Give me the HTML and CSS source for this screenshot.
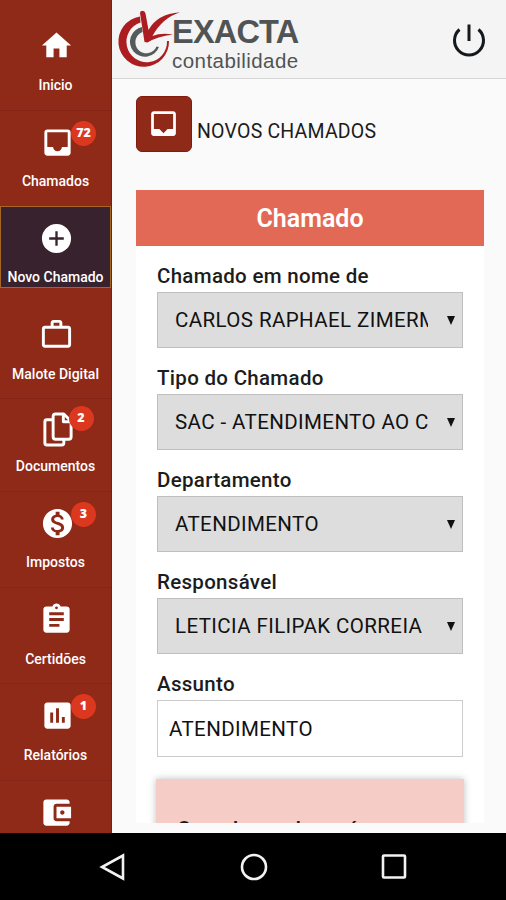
FILE: index.html
```html
<!DOCTYPE html>
<html lang="pt-BR">
<head>
    <meta charset="UTF-8">
    <meta name="viewport" content="width=device-width, initial-scale=1.0">
    <title>Exacta Contabilidade - Novo Chamado</title>
    <link rel="stylesheet" href="styles.css">
</head>
<body>
    <div class="app">
        <nav class="sidebar">
            <a class="item first">
                <span class="icon"><svg viewBox="0 0 24 24"><path d="M10 20v-6h4v6h5v-8h3L12 3 2 12h3v8z"/></svg></span>
                <span class="label">Inicio</span>
            </a>
            <a class="item">
                <span class="icon shift"><svg viewBox="0 0 24 24"><path d="M19 3H5c-1.1 0-2 .9-2 2v14c0 1.1.9 2 2 2h14c1.1 0 2-.9 2-2V5c0-1.1-.9-2-2-2zm0 12h-4c0 1.66-1.35 3-3 3s-3-1.34-3-3H5V5h14v10z"/></svg><b class="badge">72</b></span>
                <span class="label">Chamados</span>
            </a>
            <a class="item active">
                <span class="icon"><svg viewBox="0 0 24 24"><path d="M12 2a10 10 0 1 0 0 20 10 10 0 0 0 0-20zm5 10.800h-4.200v4.200h-1.600v-4.200H7v-1.600h4.200V7h1.600v4.200h4.200v1.600z"/></svg></span>
                <span class="label">Novo Chamado</span>
            </a>
            <a class="item">
                <span class="icon"><svg viewBox="0 0 24 24"><path d="M14 6V4h-4v2h4zM4 8v11h16V8H4zm16-2c1.11 0 2 .89 2 2v11c0 1.11-.89 2-2 2H4c-1.11 0-2-.89-2-2V8c0-1.11.89-2 2-2h4V4c0-1.11.89-2 2-2h4c1.11 0 2 .89 2 2v2h4z"/></svg></span>
                <span class="label">Malote Digital</span>
            </a>
            <a class="item docs">
                <span class="icon shift"><svg viewBox="0 0 30 36"><path class="line" d="M10 8H3.500Q1.500 8 1.500 10V32Q1.500 34 3.500 34H19Q21 34 21 32V28"/><path class="line" d="M12.500 2H21L28.500 9.500V25.500Q28.500 28 26 28H12.500Q10 28 10 25.500V4.500Q10 2 12.500 2zM20.500 2V10H28"/></svg><b class="badge">2</b></span>
                <span class="label">Documentos</span>
            </a>
            <a class="item">
                <span class="icon shift"><svg viewBox="0 0 24 24"><path d="M12 2C6.480 2 2 6.480 2 12s4.480 10 10 10 10-4.480 10-10S17.520 2 12 2zm1.410 16.090V20h-2.670v-1.930c-1.710-.360-3.160-1.460-3.270-3.400h1.960c.100 1.050.820 1.870 2.650 1.870 1.960 0 2.400-.980 2.400-1.590 0-.830-.440-1.610-2.670-2.140-2.480-.600-4.180-1.620-4.180-3.670 0-1.720 1.390-2.840 3.110-3.210V4h2.670v1.950c1.860.450 2.790 1.860 2.850 3.390H14.300c-.050-1.110-.640-1.870-2.220-1.870-1.500 0-2.400.680-2.400 1.640 0 .840.650 1.390 2.670 1.910s4.180 1.390 4.180 3.910c-.010 1.830-1.380 2.830-3.120 3.160z"/></svg><b class="badge">3</b></span>
                <span class="label">Impostos</span>
            </a>
            <a class="item">
                <span class="icon"><svg viewBox="0 0 24 24"><path d="M19 3h-4.180C14.400 1.840 13.300 1 12 1c-1.300 0-2.400.840-2.820 2H5c-1.100 0-2 .9-2 2v14c0 1.100.9 2 2 2h14c1.100 0 2-.9 2-2V5c0-1.100-.9-2-2-2zm-7 0c.55 0 1 .45 1 1s-.45 1-1 1-1-.45-1-1 .45-1 1-1zm2 14H7v-2h7v2zm3-4H7v-2h10v2zm0-4H7V7h10v2z"/></svg></span>
                <span class="label">Certidões</span>
            </a>
            <a class="item">
                <span class="icon shift"><svg viewBox="0 0 24 24"><path d="M19 3H5c-1.100 0-2 .9-2 2v14c0 1.100.9 2 2 2h14c1.100 0 2-.9 2-2V5c0-1.100-.9-2-2-2zM9 17H7v-7h2v7zm4 0h-2V7h2v10zm4 0h-2v-4h2v4z"/></svg><b class="badge">1</b></span>
                <span class="label">Relatórios</span>
            </a>
            <a class="item">
                <span class="icon"><svg viewBox="0 0 24 24"><path d="M21 18v1c0 1.100-.9 2-2 2H5c-1.110 0-2-.9-2-2V5c0-1.100.890-2 2-2h14c1.100 0 2 .9 2 2v1h-9c-1.110 0-2 .9-2 2v8c0 1.100.890 2 2 2h9zm-9-2h10V8H12v8zm4-2.500c-.830 0-1.500-.670-1.500-1.500s.670-1.500 1.500-1.500 1.500.670 1.500 1.500-.670 1.500-1.500 1.500z"/></svg></span>
            </a>
        </nav>

        <div class="page">
            <header class="topbar">
                <div class="logo">
                    <svg class="logo-mark" viewBox="0 0 62 62">
                        <path class="ring" d="M21 6.500A25.300 25.300 0 1 0 50 31H48A20.300 20.300 0 1 1 21.500 12.500z"/>
                        <path class="core" d="M23 17A15 15 0 1 0 40 37L37.500 36.500A11 11 0 1 1 23.500 22z"/>
                        <path class="ring" d="M21 3Q21 .8 23.500 .8 26 .8 26.500 3.500L29.500 20Q38 4 61 2.200 43 8 33.500 26 42 22.500 54 24.500 38 26.500 28.500 32.500L25.500 32z"/>
                    </svg>
                    <div class="logo-text">
                        <strong>EXACTA</strong>
                        <span>contabilidade</span>
                    </div>
                </div>
                <svg class="power" viewBox="0 0 34 34"><path d="M7.500 6.500a14.500 14.500 0 1 0 19 0M17 1.500V18"/></svg>
            </header>

            <main class="content">
                <div class="heading">
                    <span class="heading-icon"><svg viewBox="0 0 24 24"><path d="M19 3H5c-1.100 0-2 .9-2 2v14c0 1.100.9 2 2 2h14c1.100 0 2-.9 2-2V5c0-1.100-.9-2-2-2zm0 13h-4l-3 3-3-3H5V5h14v11z"/></svg></span>
                    <h1>NOVOS CHAMADOS</h1>
                </div>

                <form class="card">
                    <h2>Chamado</h2>
                    <div class="fields">
                        <label>Chamado em nome de</label>
                        <div class="select"><span>CARLOS RAPHAEL ZIMERM</span><i></i></div>
                        <label>Tipo do Chamado</label>
                        <div class="select"><span>SAC - ATENDIMENTO AO C</span><i></i></div>
                        <label>Departamento</label>
                        <div class="select"><span>ATENDIMENTO</span><i></i></div>
                        <label>Responsável</label>
                        <div class="select"><span>LETICIA FILIPAK CORREIA</span><i></i></div>
                        <label>Assunto</label>
                        <input type="text" value="ATENDIMENTO">
                        <div class="notice">Quando usado será</div>
                    </div>
                </form>
            </main>
        </div>
    </div>

    <footer class="navbar">
        <svg viewBox="0 0 28 28"><path d="M24 2.500V25.500L3 14z"/></svg>
        <svg viewBox="0 0 28 28"><circle cx="14" cy="14" r="12"/></svg>
        <svg viewBox="0 0 28 28"><rect x="3" y="2.500" width="22" height="22" rx="1"/></svg>
    </footer>
</body>
</html>
```
FILE: styles.css
```css
:root {
    --brand: #8f2918;
    --brand-dark: #84190e;
    --badge: #dc3820;
    --coral: #e36957;
}

* {
    box-sizing: border-box;
}

body {
    margin: 0;
    height: 100vh;
    display: flex;
    flex-direction: column;
    overflow: hidden;
    background: #000;
    color: #1c1c1c;
    font-family: Roboto, sans-serif;
}

.app {
    display: flex;
    height: 833px;
    overflow: hidden;
    background: #fafafa;
}

/* sidebar */
.sidebar {
    width: 112px;
    flex: none;
    overflow: hidden;
    background: var(--brand);
    border-right: 1px solid var(--brand-dark);
}

.item {
    display: flex;
    flex-direction: column;
    align-items: center;
    height: 96.3px;
    padding-top: 14px;
    border-top: 1px solid #842417;
    color: #fff;
}

.item.first {
    height: 109.5px;
    padding-top: 28px;
    border-top: none;
}

.item.active {
    height: 82px;
    margin-bottom: 14.3px;
    background: #38222e;
    border: 1px solid #a76624;
}

.item.active + .item {
    border-top-color: transparent;
}

.item.docs {
    height: 92.3px;
    padding-top: 13px;
}

.icon {
    position: relative;
    left: 0.5px;
    height: 35px;
}

.icon.shift {
    left: 2px;
}

.icon svg {
    display: block;
    width: 35px;
    height: 35px;
    fill: #fff;
}

.docs .icon svg {
    width: 30px;
}

.icon .line {
    fill: none;
    stroke: #fff;
    stroke-width: 3;
    stroke-linejoin: round;
}

.badge {
    position: absolute;
    left: 31px;
    top: -4px;
    width: 25px;
    height: 25px;
    border-radius: 50%;
    background: var(--badge);
    font: 800 12.5px/24px "Open Sans", sans-serif;
    text-align: center;
}

.docs .badge {
    left: 26px;
    top: -6px;
}

.label {
    margin-top: 12.7px;
    font-size: 14px;
    font-weight: 500;
    line-height: 18px;
    white-space: nowrap;
}

.docs .label {
    margin-top: 10px;
}

/* header */
.page {
    flex: 1;
    min-width: 0;
    display: flex;
    flex-direction: column;
}

.topbar {
    display: flex;
    justify-content: space-between;
    flex: none;
    height: 79px;
    padding: 10px 20px 0 7px;
    background: #f4f4f4;
    border-bottom: 1px solid #d6d6d6;
}

.logo {
    display: flex;
}

.logo-mark {
    width: 62px;
    height: 62px;
    margin-right: -9px;
    overflow: visible;
}

.ring {
    fill: #ab1d20;
}

.core {
    fill: #555b5b;
}

.logo-text {
    padding-top: 4px;
    color: #505454;
    font-family: "Liberation Sans", sans-serif;
}

.logo-text strong {
    display: block;
    font-size: 32.5px;
    line-height: 36px;
    letter-spacing: -0.8px;
}

.logo-text span {
    display: block;
    font-size: 20.5px;
    line-height: 21px;
    letter-spacing: 0.45px;
}

.power {
    width: 34px;
    height: 34px;
    margin-top: 13px;
    fill: none;
    stroke: #15191b;
    stroke-width: 3;
}

/* content */
.content {
    flex: 1;
    min-height: 0;
    margin-bottom: 10px;
    padding: 17px 22px 0 24px;
    overflow: hidden;
}

.heading {
    display: flex;
    height: 94px;
}

.heading-icon {
    width: 56px;
    height: 56px;
    padding: 10px;
    border-radius: 6px;
    background: var(--brand);
    border: 1px solid var(--brand-dark);
}

.heading-icon svg {
    display: block;
    width: 33px;
    height: 33px;
    fill: #fff;
}

h1 {
    margin: 24px 0 0 5px;
    font-size: 19.5px;
    font-weight: 400;
    line-height: 24px;
    letter-spacing: 0.2px;
}

.card {
    background: #fff;
}

h2 {
    margin: 0;
    height: 56px;
    background: var(--coral);
    color: #fff;
    font-size: 25px;
    font-weight: 600;
    line-height: 57px;
    text-align: center;
}

.fields {
    padding: 14px 21px 0;
}

label {
    display: block;
    height: 32px;
    font-size: 20.5px;
    font-weight: 500;
    line-height: 32px;
    letter-spacing: 0.3px;
}

.select {
    display: flex;
    align-items: center;
    justify-content: space-between;
    height: 56px;
    margin-bottom: 14px;
    padding: 0 7px 0 17px;
    background: #ddd;
    border: 1px solid #bfbfbf;
    color: #111;
    font-size: 20.5px;
    font-weight: 450;
    letter-spacing: 0.4px;
}

.select span {
    width: 253px;
    overflow: hidden;
    white-space: nowrap;
}

.select i {
    border: 4.5px solid transparent;
    border-top: 9px solid #111;
    border-bottom: 0;
}

input {
    display: block;
    width: 100%;
    height: 57px;
    padding: 0 11px;
    border: 1px solid #ccc;
    background: #fff;
    color: #111;
    font: 450 20.5px Roboto, sans-serif;
    letter-spacing: 0.4px;
}

.notice {
    height: 120px;
    margin: 22px -1px 0;
    padding: 38px 21px 0;
    background: #f5ccc6;
    box-shadow: 0 0 7px rgba(0, 0, 0, 0.25);
    font-size: 21px;
    font-weight: 500;
    line-height: 25px;
}

/* android navigation */
.navbar {
    flex: 1;
    display: flex;
    justify-content: space-between;
    align-items: center;
    padding: 0 98px 0 99px;
    background: #000;
}

.navbar svg {
    width: 28px;
    height: 28px;
    fill: none;
    stroke: #f2f2f2;
    stroke-width: 2.6;
}
```
